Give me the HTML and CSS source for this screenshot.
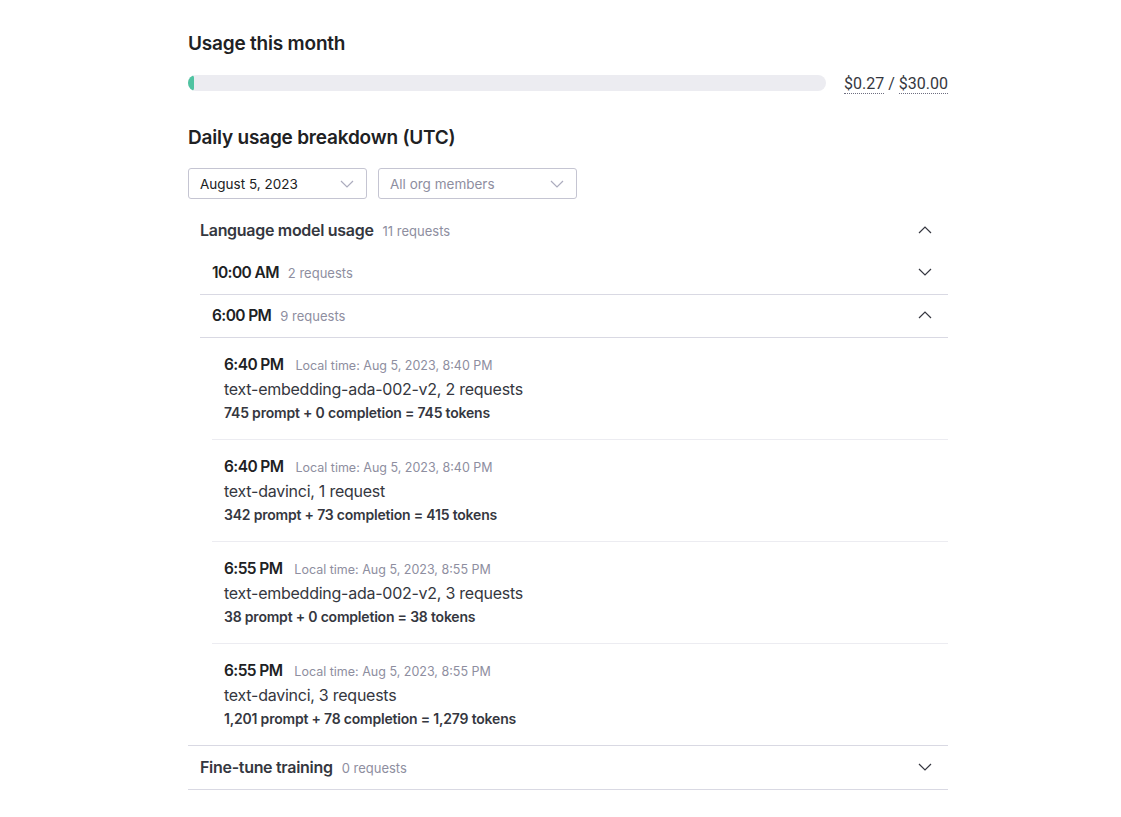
FILE: index.html
```html
<!DOCTYPE html>
<html lang="en">

<head>
    <meta charset="UTF-8">
    <meta name="viewport" content="width=device-width, initial-scale=1.0">
    <title>Usage</title>
    <link rel="stylesheet" href="styles.css">
</head>

<body>
    <div class="usage-page">
        <h2 class="section-title">Usage this month</h2>
        <div class="usage-bar-row">
            <div class="usage-bar">
                <div class="usage-bar-fill" style="width: 6px"></div>
            </div>
            <div class="usage-amount"><span class="dotted">$0.27</span> / <span class="dotted">$30.00</span></div>
        </div>

        <h2 class="section-title breakdown-title">Daily usage breakdown (UTC)</h2>
        <div class="filters">
            <div class="select date-select">
                <span>August 5, 2023</span>
                <svg class="chev" width="14" height="8" viewBox="0 0 14 8"><polyline points="1,1 7,7 13,1" /></svg>
            </div>
            <div class="select member-select">
                <span class="placeholder">All org members</span>
                <svg class="chev" width="14" height="8" viewBox="0 0 14 8"><polyline points="1,1 7,7 13,1" /></svg>
            </div>
        </div>

        <div class="group">
            <div class="row group-head">
                <div><span class="row-title">Language model usage</span><span class="count">11 requests</span></div>
                <svg class="chev dark" width="14" height="8" viewBox="0 0 14 8"><polyline points="1,7 7,1 13,7" /></svg>
            </div>
            <div class="group-body">
                <div class="row hour-head">
                    <div><span class="hour">10:00 AM</span><span class="count">2 requests</span></div>
                    <svg class="chev dark" width="14" height="8" viewBox="0 0 14 8"><polyline points="1,1 7,7 13,1" /></svg>
                </div>
                <div class="row hour-head">
                    <div><span class="hour">6:00 PM</span><span class="count">9 requests</span></div>
                    <svg class="chev dark" width="14" height="8" viewBox="0 0 14 8"><polyline points="1,7 7,1 13,7" /></svg>
                </div>
                <div class="entries">
                    <div class="entry">
                        <div><span class="hour">6:40 PM</span><span class="local">Local time: Aug 5, 2023, 8:40 PM</span></div>
                        <div class="model">text-embedding-ada-002-v2, 2 requests</div>
                        <div class="tokens">745 prompt + 0 completion = 745 tokens</div>
                    </div>
                    <div class="entry">
                        <div><span class="hour">6:40 PM</span><span class="local">Local time: Aug 5, 2023, 8:40 PM</span></div>
                        <div class="model">text-davinci, 1 request</div>
                        <div class="tokens">342 prompt + 73 completion = 415 tokens</div>
                    </div>
                    <div class="entry">
                        <div><span class="hour">6:55 PM</span><span class="local">Local time: Aug 5, 2023, 8:55 PM</span></div>
                        <div class="model">text-embedding-ada-002-v2, 3 requests</div>
                        <div class="tokens">38 prompt + 0 completion = 38 tokens</div>
                    </div>
                    <div class="entry">
                        <div><span class="hour">6:55 PM</span><span class="local">Local time: Aug 5, 2023, 8:55 PM</span></div>
                        <div class="model">text-davinci, 3 requests</div>
                        <div class="tokens">1,201 prompt + 78 completion = 1,279 tokens</div>
                    </div>
                </div>
            </div>
        </div>

        <div class="group last">
            <div class="row group-head">
                <div><span class="row-title">Fine-tune training</span><span class="count">0 requests</span></div>
                <svg class="chev dark" width="14" height="8" viewBox="0 0 14 8"><polyline points="1,1 7,7 13,1" /></svg>
            </div>
        </div>
    </div>
</body>

</html>
```

FILE: styles.css
```css
body {
    margin: 0;
    padding: 0;
    font-family: Inter, "Noto Sans", sans-serif;
    color: #202123;
    background: #fff;
}

.usage-page {
    width: 760px;
    margin-left: 188px;
    padding-top: 31px;
}

.section-title {
    margin: 0;
    font-size: 19px;
    font-weight: 600;
    line-height: 26px;
    letter-spacing: -0.2px;
}

.usage-bar-row {
    display: flex;
    align-items: center;
    margin-top: 17px;
    height: 18px;
}

.usage-bar {
    width: 638px;
    height: 16px;
    border-radius: 8px;
    background-color: #ececf1;
    overflow: hidden;
}

.usage-bar-fill {
    height: 100%;
    border-radius: 3px;
    background-color: #4fc3a1;
}

.usage-amount {
    margin-left: auto;
    font-family: Roboto, sans-serif;
    font-size: 16px;
    color: #353740;
}

.dotted {
    border-bottom: 1px dotted #6e6e80;
}

.breakdown-title {
    margin-top: 33px;
}

.filters {
    display: flex;
    gap: 11px;
    margin-top: 17px;
}

.select {
    height: 31px;
    box-sizing: border-box;
    border: 1px solid #c5c5d2;
    border-radius: 3px;
    display: flex;
    align-items: center;
    justify-content: space-between;
    padding: 0 12px 0 11px;
    font-size: 13.5px;
    color: #202123;
}

.date-select {
    width: 179px;
}

.member-select {
    width: 199px;
}

.placeholder {
    color: #8e8ea0;
}

.chev polyline {
    fill: none;
    stroke: #acacbe;
    stroke-width: 1.2;
}

.chev.dark polyline {
    stroke: #353740;
}

.group {
    margin-top: 10px;
    border-bottom: 1px solid #d9d9e3;
}

.group.last {
    margin-top: 0;
}

.row {
    display: flex;
    align-items: center;
    justify-content: space-between;
    height: 43px;
    box-sizing: border-box;
    padding: 0 16px 2px 12px;
}

.row-title {
    font-size: 16px;
    font-weight: 600;
    letter-spacing: -0.3px;
    color: #353740;
}

.count {
    margin-left: 9px;
    font-size: 13px;
    color: #8e8ea0;
}

.group-body {
    margin-left: 12px;
}

.hour-head {
    border-bottom: 1px solid #d9d9e3;
    padding-left: 12px;
    padding-right: 16px;
}

.hour {
    font-size: 15.5px;
    font-weight: 600;
    letter-spacing: -0.6px;
    color: #202123;
}

.entries {
    margin-left: 12px;
}

.entry {
    padding: 15px 12px 16px;
    border-bottom: 1px solid #ececf1;
    line-height: 23px;
}

.entry:last-child {
    border-bottom: none;
}

.local {
    margin-left: 12px;
    font-size: 12.5px;
    color: #8e8ea0;
}

.model {
    font-size: 16px;
    color: #353740;
    letter-spacing: -0.25px;
    line-height: 25px;
}

.tokens {
    font-size: 14px;
    font-weight: 600;
    color: #353740;
    letter-spacing: -0.2px;
    line-height: 21px;
}
```
